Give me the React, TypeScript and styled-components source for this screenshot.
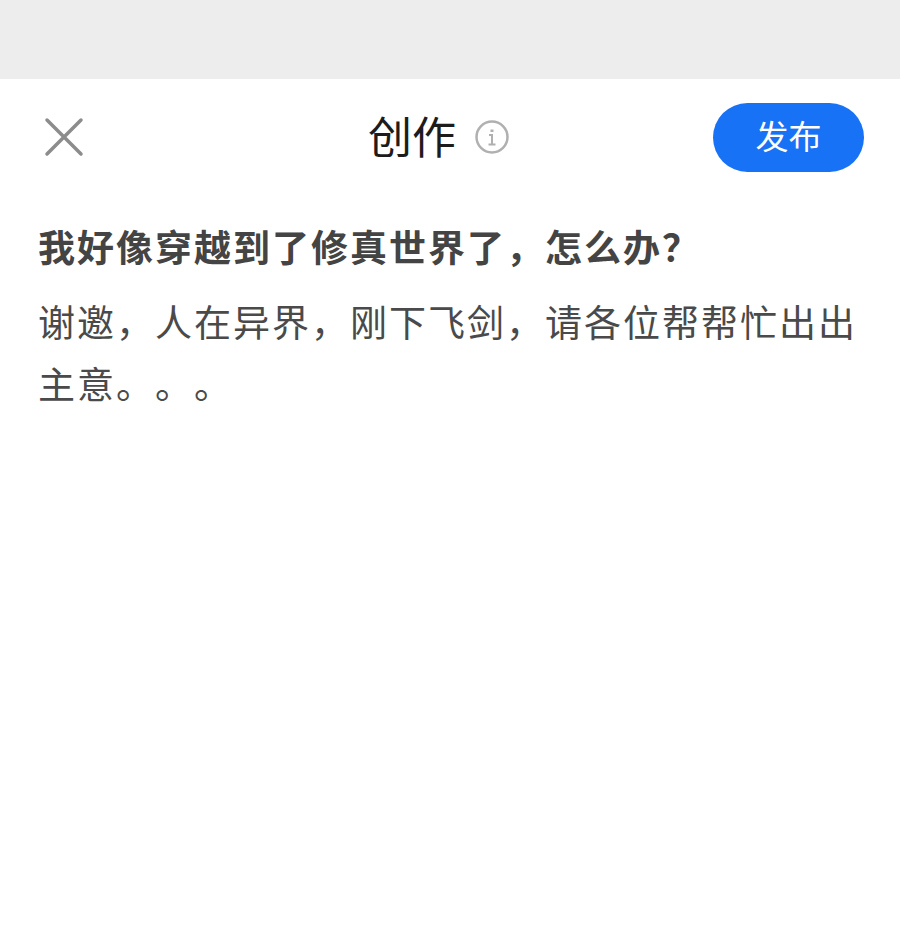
import React from 'react';
import styled, { createGlobalStyle } from 'styled-components';

const GlobalStyle = createGlobalStyle`
  html, body {
    margin: 0;
    padding: 0;
    background: #fff;
  }
  body {
    font-family: "Noto Sans CJK SC", "Liberation Sans", sans-serif;
    text-spacing-trim: space-all;
  }
`;

const Page = styled.div`
  width: 900px;
  height: 925px;
  background: #fff;
  overflow: hidden;
`;

const StatusBar = styled.div`
  height: 79px;
  background: #ededed;
`;

const Header = styled.header`
  height: 116px;
  display: grid;
  grid-template-columns: 324px auto 1fr;
  align-items: center;
  padding: 0 36px 0 44px;
`;

const CloseButton = styled.button`
  width: 40px;
  height: 40px;
  padding: 0;
  border: 0;
  background: none;
  color: #8c8c8c;
  justify-self: start;
`;

const TitleGroup = styled.div`
  display: flex;
  align-items: center;
  gap: 18px;
`;

const Title = styled.h1`
  margin: 0 0 4px;
  font-size: 44px;
  line-height: 60px;
  font-weight: 400;
  color: #1c1c1c;
`;

const PublishButton = styled.button`
  justify-self: end;
  width: 151px;
  height: 69px;
  padding: 0 0 4px;
  border: 0;
  border-radius: 35px;
  background: #1772f6;
  color: #fff;
  font-family: inherit;
  font-size: 33px;
`;

const Content = styled.main`
  padding: 18px 38px 0 38px;
`;

const QuestionTitle = styled.h2`
  margin: 0 0 11px;
  font-size: 37px;
  letter-spacing: 2px;
  line-height: 66px;
  font-weight: 700;
  color: #444;
`;

const Body = styled.p`
  margin: 0;
  font-size: 37px;
  letter-spacing: 2px;
  line-height: 62px;
  color: #4a4a4a;
`;

const InfoIcon = () => (
  <svg width="36" height="36" viewBox="0 0 36 36" fill="none" stroke="#b0b0b0" strokeWidth="2.5">
    <circle cx="18" cy="18" r="15.5" />
    <path d="M15 16h3v9M14.5 25.5h7" strokeWidth="2" />
    <path d="M18 10.5v2.5" strokeWidth="3" />
  </svg>
);

export default function App() {
  return (
    <Page>
      <GlobalStyle />
      <StatusBar />
      <Header>
        <CloseButton aria-label="关闭">
          <svg width="40" height="40" viewBox="0 0 40 40" fill="none" stroke="currentColor" strokeWidth="3.5" strokeLinecap="round">
            <path d="M3 3l34 34M37 3L3 37" />
          </svg>
        </CloseButton>
        <TitleGroup>
          <Title>创作</Title>
          <InfoIcon />
        </TitleGroup>
        <PublishButton>发布</PublishButton>
      </Header>
      <Content>
        <QuestionTitle>我好像穿越到了修真世界了，怎么办？</QuestionTitle>
        <Body>谢邀，人在异界，刚下飞剑，请各位帮帮忙出出主意。。。</Body>
      </Content>
    </Page>
  );
}
